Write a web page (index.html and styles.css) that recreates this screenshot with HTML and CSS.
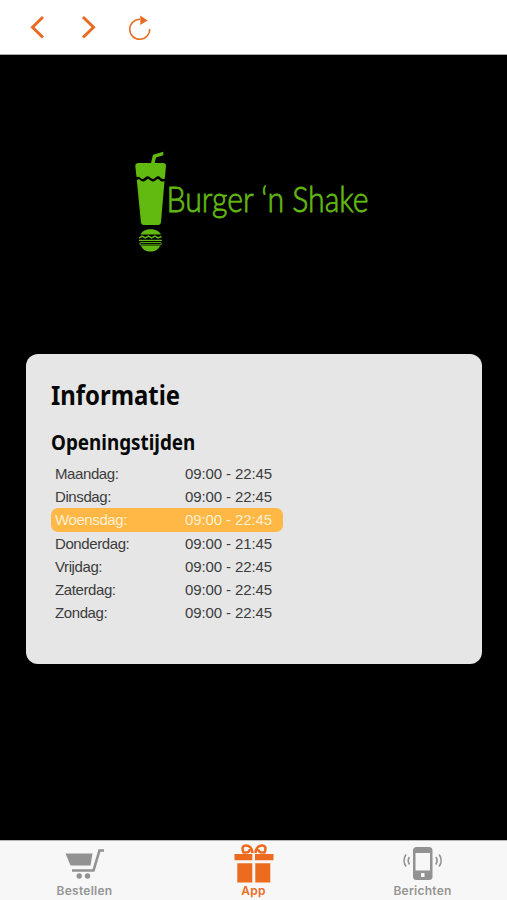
FILE: index.html
```html
<!DOCTYPE html>
<html lang="nl">
<head>
<meta charset="utf-8">
<title>Burger ‘n Shake</title>
<link rel="stylesheet" href="styles.css">
</head>
<body>
<header class="toolbar">
  <svg class="nav" viewBox="0 0 170 54" fill="none" stroke="#e96b22">
    <path d="M43 17 32.500 27.300 43 37.500M83 17 93.500 27.300 83 37.500" stroke-width="3"/>
    <path d="M140 19.300A10 10 0 1 0 149.700 29" stroke-width="1.500"/>
    <path d="M140.300 15.500V25L147.500 20.500Z" fill="#e96b22" stroke="none"/>
  </svg>
</header>
<main class="content">
  <svg class="logo" viewBox="130 145 245 112" fill="#62b910">
    <path d="M151 163 153 154.800 163.300 151.700V155.200L156 157.600 154.700 163H163Q166 163 166 166L164.800 178.500Q162.500 180 160.700 177.800C158.700 175.300 156.700 176.200 155.500 177.500C153.600 179.600 151.800 179.300 150.200 177.500C148.300 175.500 146.500 175.900 144.700 177.700C142.500 179.800 141.300 178.800 140 177.500Q138.500 176.200 136.500 177L135.300 166Q135.300 163 138.500 163Z"/>
    <path d="M136.800 180Q139 178.500 140.800 180.500C142.700 182.400 144.800 181.500 146.500 179.800C148 178.300 149 179 150.500 180.500C152.500 182.400 154.500 181.500 156.200 179.800C158 178.200 159 179.500 160.500 181Q162.500 182.200 164.500 181L161 222Q160.700 225 158 225H144Q141.200 225 140.900 222Z"/>
    <path d="M140.500 234.500C143.500 227.500 157.500 227.500 161 234.500Z"/>
    <path d="M139.200 238.200 142 236.200 145.200 238 148.500 236.200 151.500 238 155 236.200 158 238 161.500 236.500" fill="none" stroke="#62b910" stroke-width="1.500"/>
    <path d="M139 239.700H161.800V241H139ZM141 245.700H160C157.500 253.500 143.500 253.500 141 245.700Z"/>
    <rect x="139.800" y="242.600" width="21.500" height="2.300" rx="1.100" fill="none" stroke="#62b910" stroke-width="1"/>
    <text class="brand" x="166.500" y="211.500" textLength="202" lengthAdjust="spacingAndGlyphs">Burger ‘n Shake</text>
  </svg>
  <section class="card">
    <h1><span>Informatie</span></h1>
    <h2><span>Openingstijden</span></h2>
    <dl class="hours">
      <div><dt>Maandag:</dt><dd>09:00 - 22:45</dd></div>
      <div><dt>Dinsdag:</dt><dd>09:00 - 22:45</dd></div>
      <div class="today"><dt>Woensdag:</dt><dd>09:00 - 22:45</dd></div>
      <div><dt>Donderdag:</dt><dd>09:00 - 21:45</dd></div>
      <div><dt>Vrijdag:</dt><dd>09:00 - 22:45</dd></div>
      <div><dt>Zaterdag:</dt><dd>09:00 - 22:45</dd></div>
      <div><dt>Zondag:</dt><dd>09:00 - 22:45</dd></div>
    </dl>
  </section>
</main>
<nav class="tabs">
  <a class="tab">
    <svg viewBox="63 841 44 42" fill="#929292">
      <path d="M65.500 853.500H92.500L90.500 865.500H70.500Z"/>
      <path d="M104 850.500H99.500L93.500 870.500H72" fill="none" stroke="#929292" stroke-width="2.600"/>
      <circle cx="79.200" cy="876" r="2.700"/><circle cx="87.500" cy="876" r="2.700"/>
    </svg>
    <span>Bestellen</span>
  </a>
  <a class="tab active">
    <svg viewBox="232 841 44 42" fill="#ed6b1f">
      <path d="M234.500 854H252.300V860.200H234.500ZM255 854H273.500V860.200H255ZM237.300 863.300H252.300V882.500H237.300ZM255.300 863.300H270.300V882.500H255.300Z"/>
      <path d="M252.600 853C252 848.500 249.500 845.500 246 845.500C242.500 845.500 241.600 848.500 243.500 852.500L247.500 852.300Q250 851.500 249 849.300M255.400 853C256 848.500 258.500 845.500 262 845.500C265.500 845.500 266.400 848.500 264.500 852.500L260.500 852.300Q258 851.500 259 849.300" fill="none" stroke="#ed6b1f" stroke-width="2.500"/>
    </svg>
    <span>App</span>
  </a>
  <a class="tab">
    <svg viewBox="400.500 841 44 42" fill="none" stroke="#929292" stroke-width="1.600">
      <path fill="#929292" stroke="none" fill-rule="evenodd" d="M416 847H428.500Q432 847 432 850.500V876.500Q432 880 428.500 880H416Q412.500 880 412.500 876.500V850.500Q412.500 847 416 847ZM415 853V870.500H429.500V853ZM420.500 873V877H424V873Z"/>
      <path d="M405.500 854.500Q401.500 860.500 405.500 866.500M409 857Q406.500 860.500 409 864.500M438.700 854.500Q442.700 860.500 438.700 866.500M435.300 857Q437.800 860.500 435.300 864.500"/>
    </svg>
    <span>Berichten</span>
  </a>
</nav>
</body>
</html>
```
FILE: styles.css
```css
* { box-sizing: border-box; }
body {
  margin: 0;
  height: 900px;
  display: flex;
  flex-direction: column;
  overflow: hidden;
  background: #000;
  font-family: "Liberation Sans", sans-serif;
}
.toolbar {
  height: 55px;
  flex: none;
  background: #fff;
  border-bottom: 1px solid #aaa;
}
.nav { display: block; width: 170px; height: 54px; }
.content { flex: 1; padding: 90px 25px 0 26px; }
.logo { display: block; width: 245px; height: 112px; margin-left: 104px; overflow: visible; }
.brand { font: 300 36px Lato, sans-serif; stroke: #62b910; stroke-width: .8px; }
.card {
  height: 310px;
  margin-top: 97px;
  padding: 22px 25px;
  border-radius: 12px;
  background: #e6e6e6;
}
h1, h2 {
  margin: 0;
  color: #080808;
  font-family: "Noto Sans", sans-serif;
  font-weight: 700;
  white-space: nowrap;
}
h1 span, h2 span { display: inline-block; transform-origin: left; }
h1 { font-size: 27px; line-height: 38px; }
h1 span { transform: scaleX(.885); }
h2 { margin-top: 12px; font-size: 21px; line-height: 32px; }
h2 span { transform: scaleX(.897); }
.hours {
  width: 232px;
  margin: 4px 0 0;
  color: #3c3c3c;
  font-size: 15px;
  line-height: 23.200px;
}
.hours div { display: flex; height: 23.200px; padding-left: 4px; }
.hours dt { width: 130px; letter-spacing: -.4px; }
.hours dd { margin: 0; letter-spacing: -.1px; white-space: nowrap; }
.hours .today { border-radius: 7px; background: #ffb745; color: #fff0d2; }
.tabs {
  height: 60px;
  flex: none;
  display: grid;
  grid-template-columns: repeat(3, 1fr);
  background: #f7f7f7;
  border-top: 1px solid #b5b5b5;
}
.tab {
  display: flex;
  flex-direction: column;
  align-items: center;
  color: #959595;
  font: 600 12px/16px Inter, sans-serif;
  letter-spacing: .25px;
}
.tab svg { width: 44px; height: 42px; flex: none; }
.active { color: #ed6b1f; }
```
